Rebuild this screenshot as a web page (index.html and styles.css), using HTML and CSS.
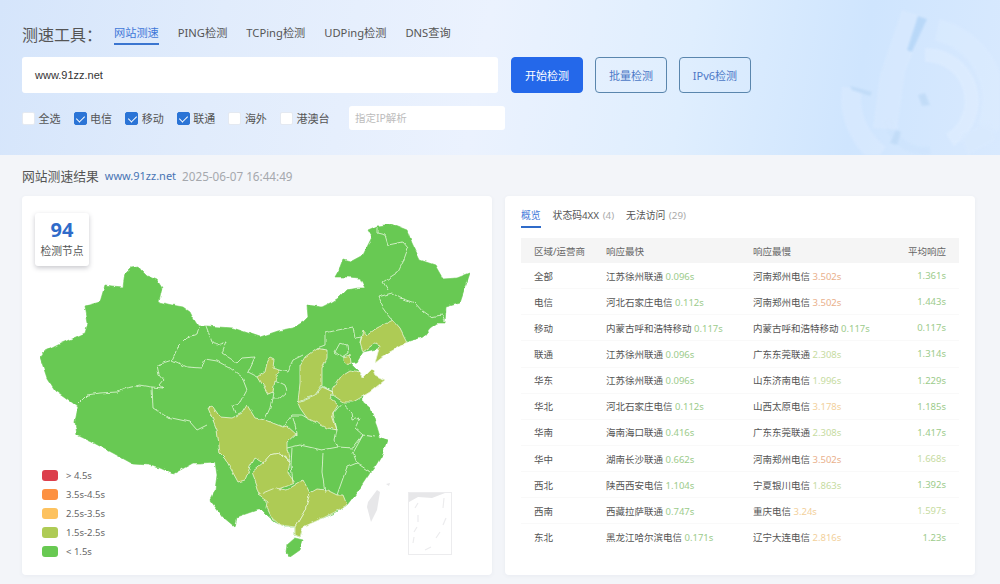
FILE: index.html
```html
<!DOCTYPE html>
<html lang="zh-CN">
<head>
<meta charset="utf-8">
<title>网站测速</title>
<link rel="stylesheet" href="styles.css">
</head>
<body>
<header class="hero">
  <svg class="hero-art" viewBox="840 0 160 155" aria-hidden="true">
    <g fill="none" stroke-linecap="butt">
      <path class="arc-a" d="M937 30A72 72 0 0 1 988 128"/>
      <path class="arc-b" d="M925 55A46 46 0 0 1 950 140"/>
      <path class="arc-c" d="M852 88A70 70 0 0 0 880 155"/>
      <path class="arc-d" d="M888 120A36 36 0 0 0 930 150"/>
    </g>
    <path class="bar" d="M902 10L927 18 905 72 897 130 873 128 880 75Z"/>
    <path class="bar-hi" d="M918 16L927 19 912 52 907 50Z"/>
    <path class="bar-hi2" d="M896 130L901 132 897 145 890 143Z"/>
    <path class="bar-hi2" d="M918 95L925 93 930 105 922 106Z"/>
    <path class="bar-hi2" d="M850 86L872 92 870 96 852 90Z"/>
    <path class="arc-e" d="M990 122L960 135 968 155 996 140Z"/>
  </svg>
  <div class="tool-row">
    <h1 class="tool-title">测速工具：</h1>
    <nav class="tool-tabs">
      <a class="tool-tab active">网站测速</a>
      <a class="tool-tab">PING检测</a>
      <a class="tool-tab">TCPing检测</a>
      <a class="tool-tab">UDPing检测</a>
      <a class="tool-tab">DNS查询</a>
    </nav>
  </div>
  <div class="search-row">
    <div class="url-input">www.91zz.net</div>
    <button class="btn primary">开始检测</button>
    <button class="btn">批量检测</button>
    <button class="btn">IPv6检测</button>
  </div>
  <div class="filter-row">
    <label class="check"><i class="box"></i>全选</label>
    <label class="check"><i class="box on"></i>电信</label>
    <label class="check"><i class="box on"></i>移动</label>
    <label class="check"><i class="box on"></i>联通</label>
    <label class="check"><i class="box"></i>海外</label>
    <label class="check"><i class="box"></i>港澳台</label>
    <div class="ip-input">指定IP解析</div>
  </div>
</header>

<main class="results">
  <div class="result-head">
    <span class="result-title">网站测速结果</span>
    <span class="result-url">www.91zz.net</span>
    <span class="result-time">2025-06-07 16:44:49</span>
  </div>
  <div class="cards">
    <section class="card map-card">
      <svg class="map" viewBox="22 196 470 379" role="img" aria-label="中国地图">
        <defs>
          <filter id="rough" x="0" y="0" width="100%" height="100%" filterUnits="objectBoundingBox">
            <feTurbulence type="fractalNoise" baseFrequency="0.13" numOctaves="2" seed="4"/>
            <feDisplacementMap in="SourceGraphic" scale="3.500" xChannelSelector="R" yChannelSelector="G"/>
          </filter>
        </defs>
        <g filter="url(#rough)">
        <path class="land" d="M40 357L44 352 58 345 62 343 85 333 88 323 85 306 100 302 105 285 112 286 123 287 125 273 131 267 138 266 141 270 147 276 157 280 162 288 159 302 172 305 183 307 190 312 193 318 198 326 207 326 220 327 233 328 248 333 260 337 278 331 293 328 303 322 308 317 307 305 322 307 332 302 340 297 347 290 358 288 365 288 360 278 348 277 335 277 340 268 343 260 350 262 363 255 368 245 372 237 368 230 377 226 392 224 407 230 412 243 420 260 435 265 443 279 457 278 470 273 465 288 460 303 446 307 445 323 437 323 430 328 423 337 407 342 363 352 357 362 350 363 360 373 362 378 363 402 370 408 377 427 380 437 387 440 382 455 376 465 370 473 360 488 347 505 335 513 323 518 313 522 303 525 300 537 295 535 295 527 285 527 275 522 268 516 262 510 257 510 237 517 235 527 223 517 210 500 215 490 217 475 215 462 200 463 193 463 173 474 160 468 148 465 133 464 113 453 92 442 77 435 75 422 78 407 65 397 55 390 47 378 42 363Z"/>
        <path class="land" d="M287 545L295 538 303 540 300 550 290 557 286 552Z"/>

        <g class="warm">
          <path d="M270 357L274 359 273 368 280 370 275 380 273 392 268 394 264 387 258 377 265 372 267 363Z"/>
          <path d="M305 357L317 348 327 350 327 358 322 368 322 385 315 395 298 402 300 383 300 365Z"/>
          <path d="M298 403L315 396 322 387 333 392 330 398 338 405 333 413 337 430 327 428 307 418 300 408Z"/>
          <path d="M333 395L332 390 342 375 350 370 360 372 362 378 372 368 375 375 385 380 370 392 360 398 353 402 343 402Z"/>
          <path d="M343 357L350 355 351 363 347 365 343 362Z"/>
          <path d="M360 342L363 330 367 335 377 328 393 320 400 328 407 342 397 348 388 353 375 363 380 345 375 343 363 352Z"/>
          <path d="M208 408L213 407 220 417 232 418 242 413 247 405 255 418 265 420 283 427 287 426 297 435 297 433 287 442 287 450 290 462 280 453 270 455 263 463 255 458 250 467 245 480 238 482 225 458 220 453 217 430Z"/>
          <path d="M252 472L263 463 270 455 280 453 290 463 288 473 295 483 277 490 260 495 257 485Z"/>
          <path d="M258 495L275 488 287 490 303 480 310 493 305 510 295 527 280 525 272 518 267 508 268 502Z"/>
          <path d="M310 493L317 489 327 490 337 495 343 495 347 505 333 513 323 518 303 527 300 537 295 535 295 527 305 510Z"/>
        </g>

        <g class="borders">
          <path d="M199 327L197 334 188 337 178 347 172 360 157 365 159 375 163 380 159 385 163 388 152 387 140 385 127 388 117 392 100 393 87 395 77 405"/>
          <path d="M172 360L187 367 202 368 205 359 217 361 230 368 242 377 247 390 240 403 232 405 235 413"/>
          <path d="M152 387L153 408 167 417 190 422 197 430 207 425"/>
          <path d="M206 326L212 342 217 345 226 342 222 353 237 363 242 358 255 357 248 372 258 377"/>
          <path d="M280 370L287 372 293 360 303 355"/>
          <path d="M317 348L325 345 325 333 338 330 353 327 355 338 362 337 360 343"/>
          <path d="M335 352L340 343 347 345 348 353 342 357Z"/>
          <path d="M273 392L272 398 280 398 287 392 285 385 275 380"/>
          <path d="M272 398L270 408 265 419"/>
          <path d="M283 427L292 415 302 415 307 418"/>
          <path d="M293 417L297 433M287 448L300 445 322 450 338 447"/>
          <path d="M337 430L332 415 342 403 352 412 353 420 360 418 355 428 363 435"/>
          <path d="M337 430L335 440 338 447 353 448 363 435 375 437"/>
          <path d="M363 435L353 453 357 463 370 472"/>
          <path d="M357 463L347 467 337 495"/>
          <path d="M323 453L322 472 325 492"/>
          <path d="M292 448L291 465 293 483"/>
          <path d="M377 227L377 233 385 235 388 245 403 242 408 248 403 262 398 272 383 282 388 290"/>
          <path d="M392 293L400 298 415 303 423 312 430 317 442 315 445 322"/>
          <path d="M392 293L378 297 382 307 390 318 393 320"/>
          <path d="M333 392L322 386"/>
        </g>
        </g>

        <path class="ghost" d="M368 502L377 490 380 492 377 510 371 522 367 507Z"/>
        <path class="ghost" d="M386 484L390 483 389 486Z"/>
        <rect class="inset" x="408.500" y="492.500" width="43" height="62"/>
        <path class="ghost" d="M409 493H445L432 498 418 497 409 502Z"/>
        <path class="ghost-line" d="M418 503L415 508M418 515V522M417 527L414 532M414 537L413 543M425 550L431 547M436 538L440 532M443 525L446 518M443 508L444 498"/>
      </svg>
      <div class="node-badge">
        <strong class="node-num">94</strong>
        <span class="node-label">检测节点</span>
      </div>
      <ul class="legend">
        <li class="legend-item"><i class="swatch s-red"></i>&gt; 4.5s</li>
        <li class="legend-item"><i class="swatch s-orange"></i>3.5s-4.5s</li>
        <li class="legend-item"><i class="swatch s-amber"></i>2.5s-3.5s</li>
        <li class="legend-item"><i class="swatch s-warm"></i>1.5s-2.5s</li>
        <li class="legend-item"><i class="swatch s-green"></i>&lt; 1.5s</li>
      </ul>
    </section>

    <section class="card table-card">
      <div class="tabs">
        <span class="tab active">概览</span>
        <span class="tab">状态码4XX <em>(4)</em></span>
        <span class="tab">无法访问 <em>(29)</em></span>
      </div>
      <div class="table">
        <div class="row head"><span>区域/运营商</span><span>响应最快</span><span>响应最慢</span><span class="avg">平均响应</span></div>
        <div class="row"><span>全部</span><span>江苏徐州联通 <b class="g">0.096s</b></span><span>河南郑州电信 <b class="r">3.502s</b></span><span class="avg g">1.361s</span></div>
        <div class="row"><span>电信</span><span>河北石家庄电信 <b class="g">0.112s</b></span><span>河南郑州电信 <b class="r">3.502s</b></span><span class="avg g">1.443s</span></div>
        <div class="row"><span>移动</span><span>内蒙古呼和浩特移动 <b class="g">0.117s</b></span><span>内蒙古呼和浩特移动 <b class="g">0.117s</b></span><span class="avg g">0.117s</span></div>
        <div class="row"><span>联通</span><span>江苏徐州联通 <b class="g">0.096s</b></span><span>广东东莞联通 <b class="y">2.308s</b></span><span class="avg g">1.314s</span></div>
        <div class="row"><span>华东</span><span>江苏徐州联通 <b class="g">0.096s</b></span><span>山东济南电信 <b class="y">1.996s</b></span><span class="avg g">1.229s</span></div>
        <div class="row"><span>华北</span><span>河北石家庄电信 <b class="g">0.112s</b></span><span>山西太原电信 <b class="o">3.178s</b></span><span class="avg g">1.185s</span></div>
        <div class="row"><span>华南</span><span>海南海口联通 <b class="g">0.416s</b></span><span>广东东莞联通 <b class="y">2.308s</b></span><span class="avg g">1.417s</span></div>
        <div class="row"><span>华中</span><span>湖南长沙联通 <b class="g">0.662s</b></span><span>河南郑州电信 <b class="r">3.502s</b></span><span class="avg y">1.668s</span></div>
        <div class="row"><span>西北</span><span>陕西西安电信 <b class="g">1.104s</b></span><span>宁夏银川电信 <b class="y">1.863s</b></span><span class="avg g">1.392s</span></div>
        <div class="row"><span>西南</span><span>西藏拉萨联通 <b class="g">0.747s</b></span><span>重庆电信 <b class="o">3.24s</b></span><span class="avg y">1.597s</span></div>
        <div class="row"><span>东北</span><span>黑龙江哈尔滨电信 <b class="g">0.171s</b></span><span>辽宁大连电信 <b class="o">2.816s</b></span><span class="avg g">1.23s</span></div>
      </div>
    </section>
  </div>
</main>
</body>
</html>
```

FILE: styles.css
```css
* { box-sizing: border-box; }
html, body { margin: 0; padding: 0; }
body {
  width: 1000px;
  height: 584px;
  overflow: hidden;
  background: #f3f5f9;
  font-family: "Noto Sans", "Noto Sans CJK SC", sans-serif;
  color: #444;
}

/* hero */
.hero {
  position: relative;
  height: 155px;
  padding: 22px 0 0 22px;
  overflow: hidden;
  background: linear-gradient(100deg, #d5e5fb 0%, #e1ecfc 22%, #ebf2fe 48%, #dfeefe 68%, #cfe5fe 85%, #d8e9fe 100%);
}
.hero-art { position: absolute; right: 0; top: 0; width: 160px; height: 155px; opacity: .6; filter: blur(1px); }
.arc-a { stroke: #e0eeff; stroke-width: 22; opacity: .55; }
.arc-b { stroke: #e6f1ff; stroke-width: 14; opacity: .7; }
.arc-c { stroke: #e3efff; stroke-width: 20; opacity: .55; }
.arc-d { stroke: #c6e0fb; stroke-width: 8; opacity: .5; }
.arc-e { fill: #dcebfe; opacity: .7; }
.bar { fill: #dcebfe; opacity: .8; }
.bar-hi { fill: #a9cff5; }
.bar-hi2 { fill: #b8d6f4; }

.tool-row { display: flex; align-items: center; height: 24px; }
.tool-title { margin: 0; width: 92px; font-size: 16px; font-weight: 400; color: #555; white-space: nowrap; }
.tool-tabs { display: flex; gap: 19px; }
.tool-tab { font-size: 11.200px; line-height: 20px; color: #555; border-bottom: 2px solid transparent; }
.tool-tab.active { color: #3f78d8; border-bottom-color: #3a75d0; }

.search-row { display: flex; align-items: stretch; margin-top: 11px; height: 36px; }
.url-input {
  width: 476px;
  margin-right: 13px;
  padding-left: 13px;
  background: #fff;
  border-radius: 3px;
  font: 11px/36px "Liberation Sans", sans-serif;
  color: #333;
}
.btn {
  width: 72px;
  margin-right: 12px;
  padding: 0;
  background: transparent;
  border: 1px solid #5a86ad;
  border-radius: 4px;
  font: 11px "Noto Sans", "Noto Sans CJK SC", sans-serif;
  color: #4c78c6;
}
.btn.primary { width: 72px; background: #2468ea; border-color: #2468ea; color: #fff; }

.filter-row { position: relative; display: flex; align-items: center; margin-top: 13px; height: 24px; }
.check { display: flex; align-items: center; width: 51.600px; font-size: 11px; color: #555; white-space: nowrap; }
.box {
  position: relative;
  flex: none;
  width: 13px;
  height: 13px;
  margin-right: 3.500px;
  background: #fff;
  border: 1px solid #e4e9f1;
  border-radius: 2px;
}
.box.on { background: #2b74d6; border-color: #2b74d6; }
.box.on::after {
  content: "";
  position: absolute;
  left: 3.500px;
  top: 1px;
  width: 4px;
  height: 7px;
  border: solid #fff;
  border-width: 0 1.500px 1.500px 0;
  transform: rotate(45deg);
}
.ip-input {
  width: 156px;
  height: 24px;
  margin-left: 17.400px;
  padding-left: 6px;
  background: #fff;
  border-radius: 3px;
  font-size: 10.500px;
  line-height: 24px;
  color: #bcbcbc;
}

/* results */
.results { padding: 0 25px 0 22px; }
.result-head { display: flex; align-items: center; gap: 6px; height: 41px; white-space: nowrap; }
.result-title { font-size: 12.800px; color: #555; }
.result-url { font-size: 11px; color: #4874b4; }
.result-time { font-size: 11.700px; color: #a5a8ad; }
.cards { display: flex; gap: 13px; }
.card { position: relative; width: 470px; height: 379px; background: #fff; border-radius: 4px; box-shadow: 0 1px 4px rgba(60, 80, 120, .06); }

/* map */
.map { display: block; width: 470px; height: 379px; }
.land { fill: #68c952; stroke: #68c952; stroke-width: .6; stroke-linejoin: round; }
.warm path { fill: #aecb55; stroke: #eaf5d8; stroke-width: .8; stroke-linejoin: round; }
.borders path { fill: none; stroke: #e6f7dd; stroke-width: .8; stroke-linejoin: round; }
.ghost { fill: #e7e7e9; }
.ghost-line { fill: none; stroke: #ececee; stroke-width: 1.200; }
.inset { fill: none; stroke: #ececee; stroke-width: 1; }

.node-badge {
  position: absolute;
  left: 13px;
  top: 17px;
  display: flex;
  flex-direction: column;
  align-items: center;
  width: 54px;
  height: 53px;
  padding-top: 4px;
  background: #fff;
  border-radius: 3px;
  box-shadow: 0 2px 5px rgba(60, 60, 80, .28);
}
.node-num { font: 700 20px/26px "Noto Sans", sans-serif; color: #2f6bc9; }
.node-label { font-size: 10.800px; line-height: 16px; color: #555; white-space: nowrap; }

.legend { position: absolute; left: 20px; top: 270px; margin: 0; padding: 0; list-style: none; }
.legend-item { display: flex; align-items: center; height: 19px; font-size: 9.500px; color: #666; white-space: nowrap; }
.swatch { width: 16px; height: 11px; margin-right: 8px; border-radius: 3px; }
.s-red { background: #dc3f4d; }
.s-orange { background: #fd9142; }
.s-amber { background: #fdc25f; }
.s-warm { background: #aecb55; }
.s-green { background: #68c952; }

/* table */
.table-card { padding: 10px 16px 0; }
.tabs { display: flex; gap: 12px; height: 22px; }
.tab { height: 22px; font-size: 9.800px; line-height: 20px; color: #555; white-space: nowrap; }
.tab.active { color: #3f78d8; border-bottom: 2px solid #2f6bc9; }
.tab em { font-style: normal; color: #aaa; margin-left: 1px; }
.table { margin-top: 10px; width: 438px; }
.row {
  display: grid;
  grid-template-columns: 72px 147px 1fr 60px;
  align-items: center;
  height: 26.150px;
  padding: 0 13px;
  border-bottom: 1px solid #f9f9f9;
  font-size: 9.500px;
  color: #555;
  white-space: nowrap;
}
.row:last-child { border-bottom: 0; }
.row.head { height: 25px; background: #f5f5f5; border-bottom: 0; color: #666; }
.row b { font-weight: 400; }
.avg { text-align: right; }
.g { color: #9ccb8b; }
.y { color: #c6db9f; }
.o { color: #f2d09b; }
.r { color: #e9b08c; }
```
